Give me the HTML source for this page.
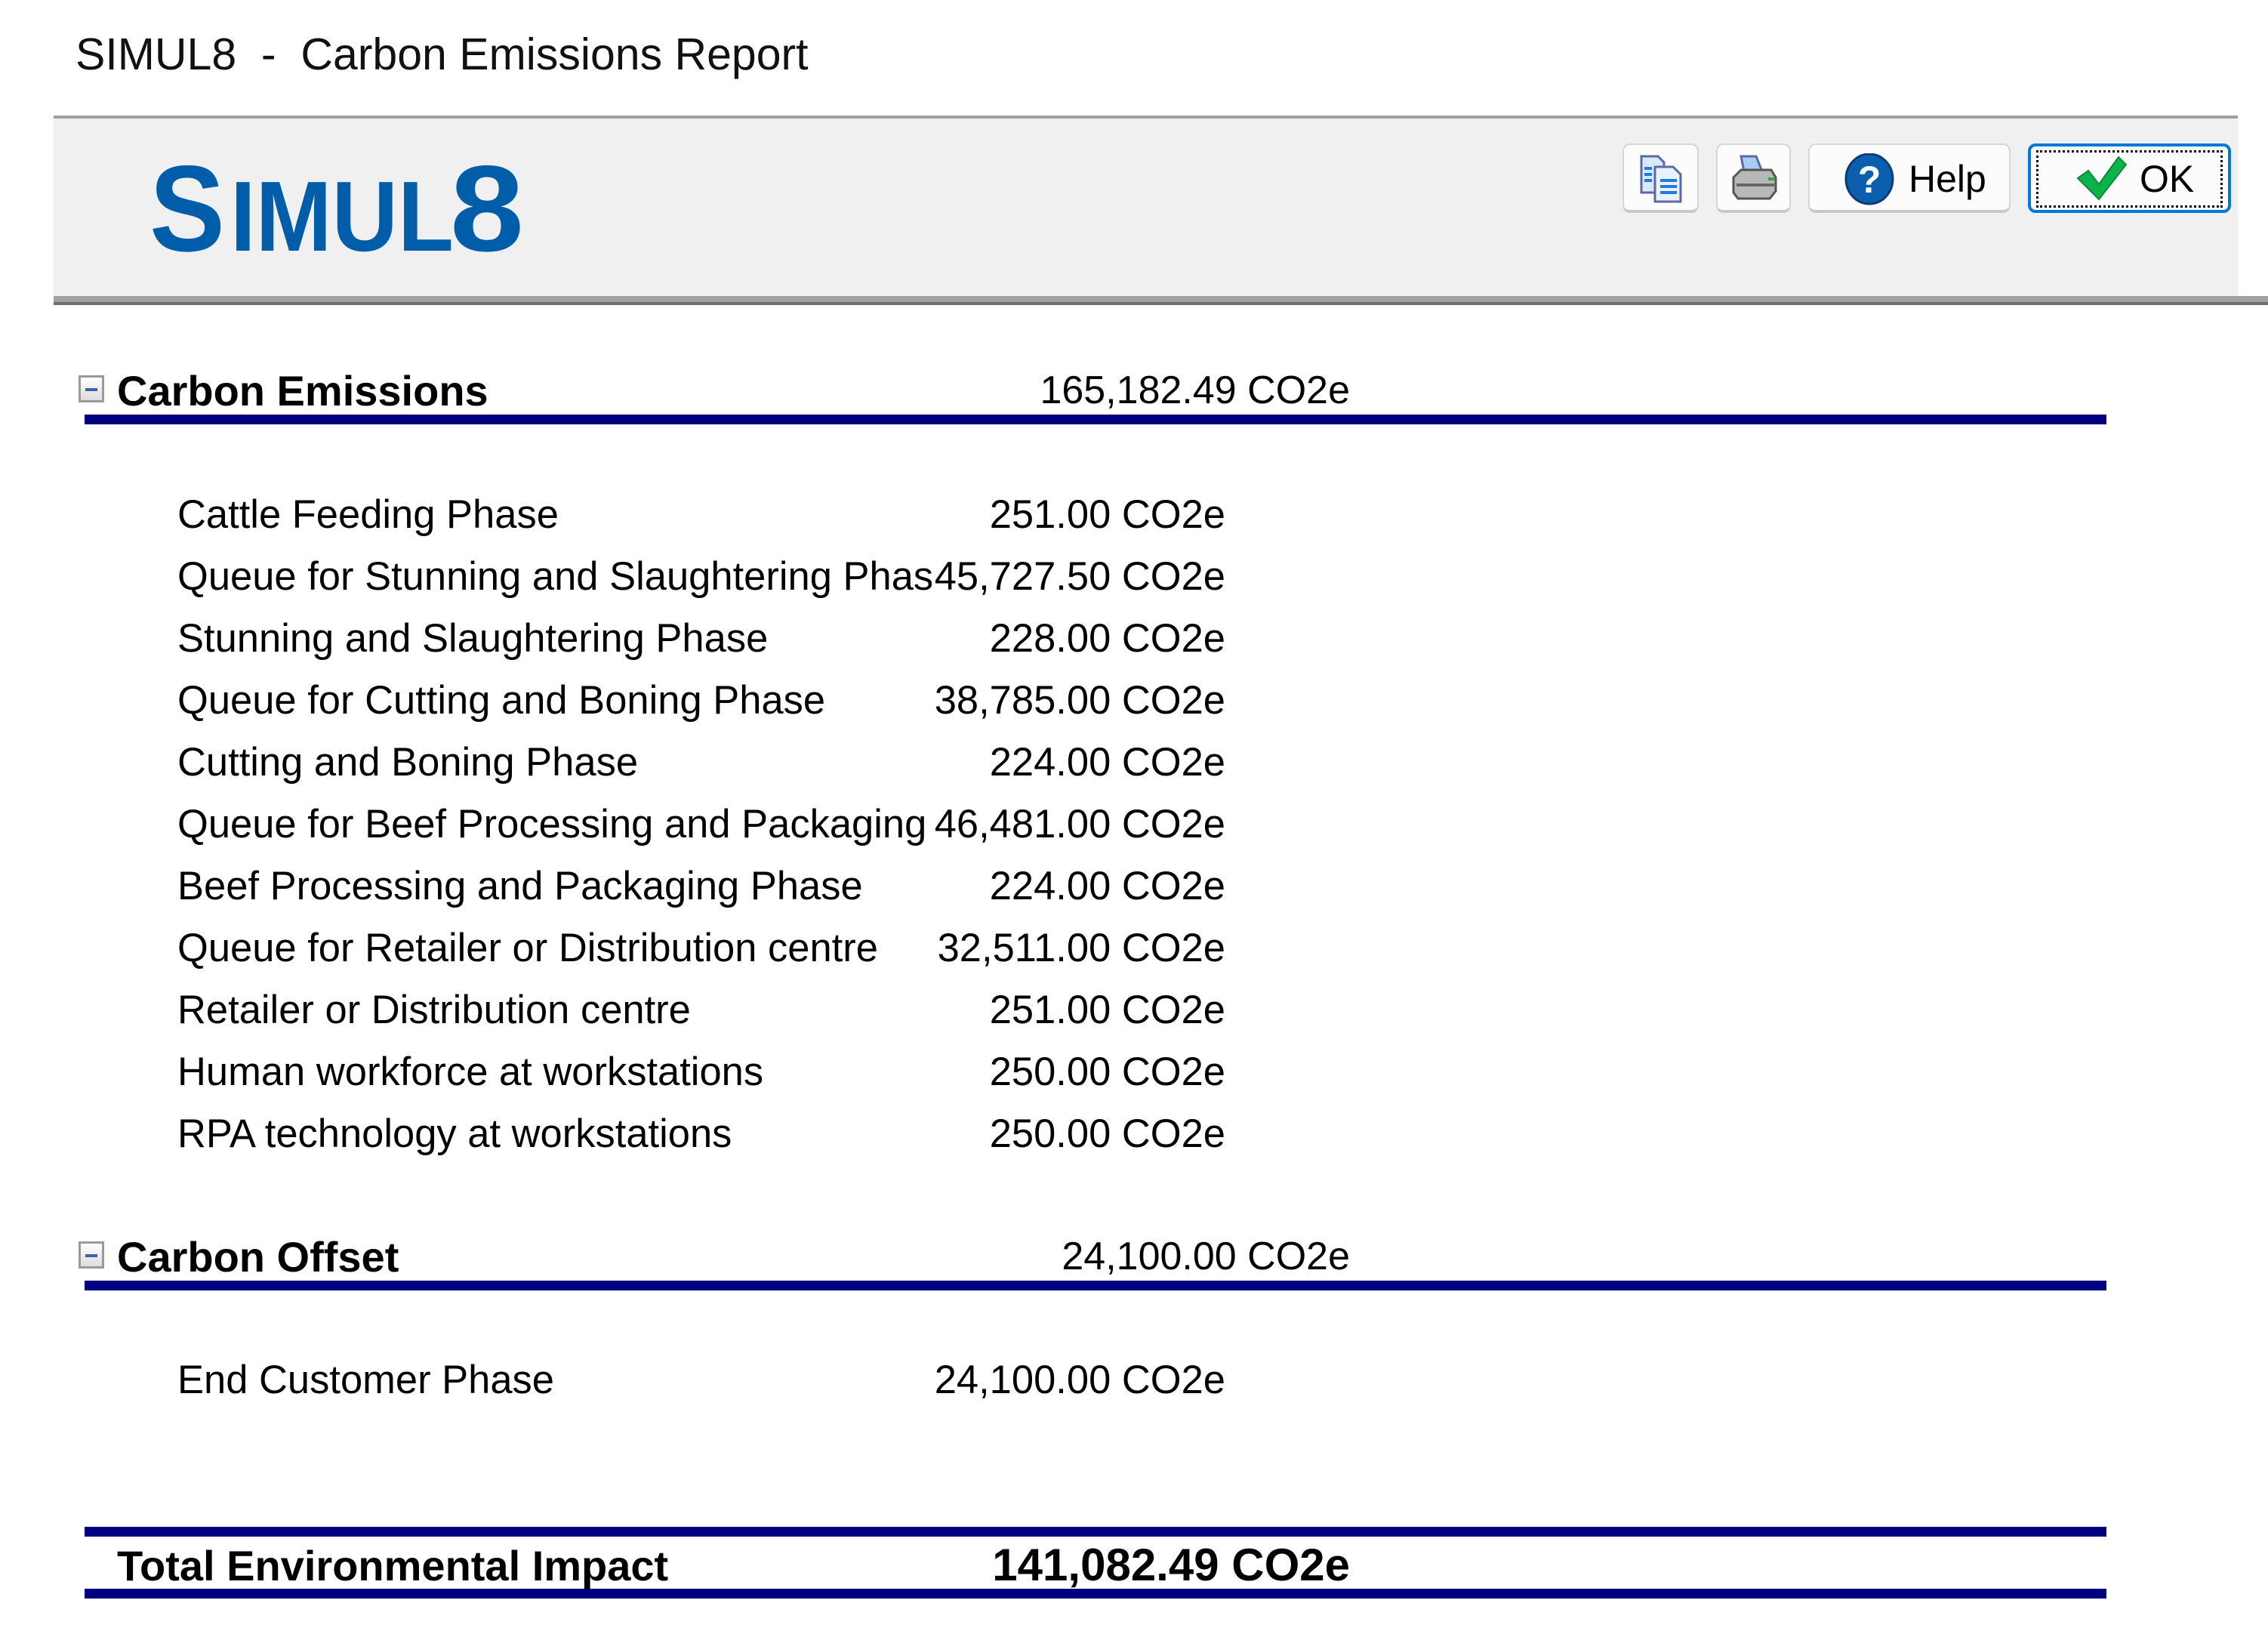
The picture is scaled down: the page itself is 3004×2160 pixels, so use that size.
<!DOCTYPE html>
<html><head><meta charset="utf-8"><style>
html,body{margin:0;padding:0;background:#fff;}
body{width:3004px;height:2160px;position:relative;overflow:hidden;font-family:"Liberation Sans",Arial,sans-serif;color:#000;}
.a{position:absolute;white-space:nowrap;}
.title{left:100px;top:32px;font-size:59px;line-height:80px;color:#111;}
.panel{position:absolute;left:71px;top:153px;width:2893px;height:237px;background:#f0f0f0;border-top:4px solid #a0a0a0;}
.pb1{position:absolute;left:71px;top:392px;width:2933px;height:8px;background:#a0a0a0;}
.pb2{position:absolute;left:71px;top:400px;width:2933px;height:4px;background:#707070;}
.btn{position:absolute;top:190px;height:92px;background:#fcfcfc;border:2px solid #d6d6d6;border-bottom:4px solid #c8c8c8;border-radius:10px;box-sizing:border-box;}
.line{position:absolute;left:112px;width:2678px;height:13px;background:#000080;}
.lbl{position:absolute;left:235px;width:1020px;overflow:hidden;font-size:52.5px;line-height:64px;white-space:nowrap;}
.val{position:absolute;right:1381px;font-size:52.5px;line-height:64px;white-space:nowrap;text-align:right;background:#fff;}
.hd{position:absolute;left:155px;font-size:56px;font-weight:bold;line-height:64px;white-space:nowrap;}
.hv{position:absolute;right:1216px;font-size:52px;line-height:64px;white-space:nowrap;}
.mb{position:absolute;left:104px;width:34px;height:36px;border:3px solid #9a9a9a;box-sizing:border-box;background:linear-gradient(#fff,#ddd);}
.mb:after{content:"";position:absolute;left:6px;top:14px;width:16px;height:4px;background:#3a60b0;}
</style></head><body>
<div class="a title">SIMUL8&nbsp;&nbsp;-&nbsp;&nbsp;Carbon Emissions Report</div>
<div class="panel"></div>
<div class="pb1"></div><div class="pb2"></div>
<svg class="a" style="left:190px;top:200px" width="540" height="160">
<g fill="#005daa" font-family="Liberation Sans,Arial,sans-serif" font-weight="bold">
<text x="8" y="132" font-size="162" textLength="100" lengthAdjust="spacingAndGlyphs">S</text>
<text x="115" y="132" font-size="132" textLength="296" lengthAdjust="spacingAndGlyphs">IMUL</text>
<text x="406" y="132" font-size="162" textLength="98" lengthAdjust="spacingAndGlyphs">8</text>
</g></svg>

<div class="btn" style="left:2149px;width:101px;"></div>
<svg class="a" style="left:2172px;top:205px" width="60" height="64">
<path d="M2 2h22l8 8v40H2z" fill="#dbe8fa" stroke="#5a6aa8" stroke-width="3"/>
<path d="M20 16h24l10 10v36H20z" fill="#eaf2fd" stroke="#5a6aa8" stroke-width="3"/>
<g stroke="#1e7be0" stroke-width="4"><path d="M27 34h22M27 42h22M27 50h22"/><path d="M6 18h10M6 26h10M6 34h10"/></g>
</svg>
<div class="btn" style="left:2273px;width:99px;"></div>
<svg class="a" style="left:2292px;top:205px" width="64" height="64">
<path d="M14 2h20l8 20H18z" fill="#a8cdf2" stroke="#5a6aa8" stroke-width="3"/>
<path d="M4 30l10-10h40l6 10v18l-8 10H10L4 50z" fill="#b8b8b8" stroke="#555" stroke-width="3"/>
<path d="M8 40h50" stroke="#666" stroke-width="4"/><rect x="50" y="30" width="8" height="4" fill="#3a3"/>
</svg>
<div class="btn" style="left:2395px;width:268px;"></div>
<svg class="a" style="left:2442px;top:203px" width="70" height="70">
<ellipse cx="34" cy="34" rx="31" ry="33" fill="#0b5fae" stroke="#073d7a" stroke-width="3"/>
<text x="34" y="52" font-size="50" font-weight="bold" fill="#fff" text-anchor="middle" font-family="Liberation Sans,sans-serif">?</text>
</svg>
<div class="a" style="left:2528px;top:207px;font-size:50px;line-height:60px;">Help</div>
<div class="btn" style="left:2686px;width:269px;border:4px solid #0078d7;"></div>
<div class="a" style="left:2697px;top:199px;width:247px;height:76px;border:3px dotted #000;box-sizing:border-box;"></div>
<svg class="a" style="left:2748px;top:204px" width="70" height="66">
<path d="M4 32l14-10 14 18L58 4l10 10-36 46z" fill="#0cb34a" stroke="#0a8a3a" stroke-width="2"/>
</svg>
<div class="a" style="left:2834px;top:207px;font-size:50px;line-height:60px;">OK</div>

<div class="mb" style="top:497px"></div>
<div class="hd" style="top:486px">Carbon Emissions</div>
<div class="hv" style="top:485px">165,182.49 CO2e</div>
<div class="line" style="top:549px"></div>

<div class="lbl" style="top:650px">Cattle Feeding Phase</div><div class="val" style="top:650px">251.00 CO2e</div>
<div class="lbl" style="top:732px">Queue for Stunning and Slaughtering Phase</div><div class="val" style="top:732px">45,727.50 CO2e</div>
<div class="lbl" style="top:814px">Stunning and Slaughtering Phase</div><div class="val" style="top:814px">228.00 CO2e</div>
<div class="lbl" style="top:896px">Queue for Cutting and Boning Phase</div><div class="val" style="top:896px">38,785.00 CO2e</div>
<div class="lbl" style="top:978px">Cutting and Boning Phase</div><div class="val" style="top:978px">224.00 CO2e</div>
<div class="lbl" style="top:1060px">Queue for Beef Processing and Packaging</div><div class="val" style="top:1060px">46,481.00 CO2e</div>
<div class="lbl" style="top:1142px">Beef Processing and Packaging Phase</div><div class="val" style="top:1142px">224.00 CO2e</div>
<div class="lbl" style="top:1224px">Queue for Retailer or Distribution centre</div><div class="val" style="top:1224px">32,511.00 CO2e</div>
<div class="lbl" style="top:1306px">Retailer or Distribution centre</div><div class="val" style="top:1306px">251.00 CO2e</div>
<div class="lbl" style="top:1388px">Human workforce at workstations</div><div class="val" style="top:1388px">250.00 CO2e</div>
<div class="lbl" style="top:1470px">RPA technology at workstations</div><div class="val" style="top:1470px">250.00 CO2e</div>

<div class="mb" style="top:1644px"></div>
<div class="hd" style="top:1633px">Carbon Offset</div>
<div class="hv" style="top:1632px">24,100.00 CO2e</div>
<div class="line" style="top:1696px"></div>

<div class="lbl" style="top:1796px">End Customer Phase</div><div class="val" style="top:1796px">24,100.00 CO2e</div>

<div class="line" style="top:2022px"></div>
<div class="hd" style="top:2042px">Total Environmental Impact</div>
<div class="hv" style="top:2041px;font-weight:bold;font-size:60px">141,082.49 CO2e</div>
<div class="line" style="top:2104px"></div>
</body></html>
